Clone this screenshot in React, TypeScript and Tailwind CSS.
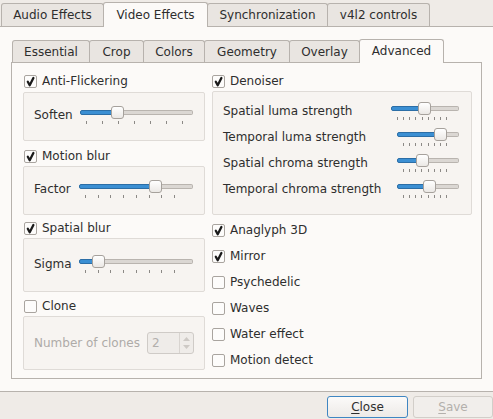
import React from 'react';

type SliderProps = { w: number; pos: number; ticks: number; t0: number; t1: number };

function Slider({ w, pos, ticks, t0, t1 }: SliderProps) {
  return (
    <div className="relative shrink-0" style={{ width: w }}>
      <div className="h-[13px] flex items-center">
        <div className="flex w-full h-[5px]">
          <div className="h-full bg-[#3b8fd3] border border-[#2c6ea6] rounded-l-[2px]" style={{ width: pos + 6 }} />
          <div className="h-full flex-1 bg-[#dbd7d3] border border-l-0 border-[#b9b4af] rounded-r-[2px]" />
        </div>
      </div>
      <span
        className="absolute top-0 w-[13px] h-[13px] rounded-[3px] border border-[#a6a19c] bg-gradient-to-b from-white to-[#ebe8e5]"
        style={{ left: pos }}
      />
      <div className="mt-[2px] h-[3px] flex justify-between" style={{ marginLeft: t0, width: t1 - t0 + 1 }}>
        {Array.from({ length: ticks }).map((_, i) => (
          <span key={i} className="w-px h-full bg-[#8c8986]" />
        ))}
      </div>
    </div>
  );
}

function Box({ checked }: { checked?: boolean }) {
  return (
    <span className="w-[13px] h-[13px] shrink-0 border border-[#a9a49f] rounded-[2px] bg-[#fdfcfb] flex items-center justify-center">
      {checked && (
        <svg width="11" height="11" viewBox="0 0 11 11">
          <path d="M2.8 5.8 L4.7 9.2 L8.4 2" fill="none" stroke="#1a1a1a" strokeWidth="2.3" strokeLinecap="round" strokeLinejoin="round" />
        </svg>
      )}
    </span>
  );
}

function CheckRow({ label, checked, className = '' }: { label: string; checked?: boolean; className?: string }) {
  return (
    <div className={`flex items-center gap-[5px] ${className}`}>
      <Box checked={checked} />
      <span>{label}</span>
    </div>
  );
}

function Tab({ label, selected, className = '' }: { label: string; selected?: boolean; className?: string }) {
  return (
    <div
      className={`flex items-center justify-center border border-b-0 border-[#b7b2ad] rounded-t-[3px] ${
        selected ? 'relative z-10 mb-[-1px] bg-[#fcfaf8] pb-[1px]' : 'bg-[#e9e5e1]'
      } ${className}`}
    >
      {label}
    </div>
  );
}

const group = 'border border-[#dfdbd7] rounded-[2px] bg-[#f7f4f1]';

export default function App() {
  return (
    <div className="w-[493px] h-[419px] overflow-hidden bg-[#efebe7] font-['DejaVu_Sans',sans-serif] text-[12px] text-[#2e2e2e]">
      <div className="flex items-end h-[26px] pl-[1px]">
        <Tab label="Audio Effects" className="w-[103px] h-[23px]" />
        <Tab label="Video Effects" selected className="w-[105px] h-[25px] -ml-px" />
        <Tab label="Synchronization" className="w-[121px] h-[23px] -ml-px" />
        <Tab label="v4l2 controls" className="w-[103px] h-[23px] -ml-px" />
      </div>

      <div className="h-[366px] border-y border-[#b7b2ad] bg-[#fcfaf8] pt-[11px] pl-[11px]">
        <div className="flex items-end h-[24px] pl-[1px]">
          <Tab label="Essential" className="w-[78px] h-[22px]" />
          <Tab label="Crop" className="w-[55px] h-[22px] -ml-px" />
          <Tab label="Colors" className="w-[62px] h-[22px] -ml-px" />
          <Tab label="Geometry" className="w-[86px] h-[22px] -ml-px" />
          <Tab label="Overlay" className="w-[71px] h-[22px] -ml-px" />
          <Tab label="Advanced" selected className="w-[85px] h-[24px] -ml-px" />
        </div>

        <div className="w-[471px] h-[317px] border border-[#b7b2ad] bg-[#fcfaf8] flex gap-[7px] pl-[11px] pt-[8px]">
          {/* left column */}
          <div className="w-[182px] flex flex-col">
            <CheckRow label="Anti-Flickering" checked className="h-[20px] pl-[1px]" />
            <div className={`${group} mt-[1px] h-[49px] flex items-center pb-[4px] pl-[10px]`}>
              <span className="w-[46px]">Soften</span>
              <Slider w={113} pos={31} ticks={7} t0={6} t1={102} />
            </div>

            <CheckRow label="Motion blur" checked className="h-[20px] mt-[5px] pl-[1px]" />
            <div className={`${group} h-[49px] flex items-center pb-[4px] pl-[10px]`}>
              <span className="w-[45px]">Factor</span>
              <Slider w={114} pos={70} ticks={8} t0={6} t1={95} />
            </div>

            <CheckRow label="Spatial blur" checked className="h-[20px] mt-[3px] pl-[1px]" />
            <div className={`${group} h-[54px] flex items-center pb-[3px] pl-[10px]`}>
              <span className="w-[45px]">Sigma</span>
              <Slider w={114} pos={13} ticks={8} t0={6} t1={95} />
            </div>

            <CheckRow label="Clone" className="h-[20px] mt-[4px] pl-[1px]" />
            <div className={`${group} h-[54px] flex items-center pl-[10px]`}>
              <span className="w-[113px] text-[#aeaba8]">Number of clones</span>
              <div className="w-[47px] h-[22px] border border-[#cfcbc7] rounded-[3px] bg-[#efece9] flex">
                <span className="flex-1 pl-[4px] flex items-center text-[#b2afac]">2</span>
                <div className="w-[14px] border-l border-[#d8d4d0] flex flex-col items-center justify-center gap-[4px]">
                  <svg width="7" height="4" viewBox="0 0 7 4"><path d="M0 4 L3.5 0 L7 4Z" fill="#cdc9c5" /></svg>
                  <svg width="7" height="4" viewBox="0 0 7 4"><path d="M0 0 L3.5 4 L7 0Z" fill="#cdc9c5" /></svg>
                </div>
              </div>
            </div>
          </div>

          {/* right column */}
          <div className="w-[260px] flex flex-col">
            <CheckRow label="Denoiser" checked className="h-[20px]" />
            <div className={`${group} h-[124px] flex flex-col pt-[6px] pl-[10px] pr-[12px]`}>
              <div className="h-[26px] flex items-center justify-between">
                <span>Spatial luma strength</span>
                <Slider w={68} pos={27} ticks={9} t0={6} t1={55} />
              </div>
              <div className="h-[26px] flex items-center justify-between">
                <span>Temporal luma strength</span>
                <Slider w={62} pos={37} ticks={8} t0={6} t1={49} />
              </div>
              <div className="h-[26px] flex items-center justify-between">
                <span>Spatial chroma strength</span>
                <Slider w={62} pos={19} ticks={8} t0={6} t1={49} />
              </div>
              <div className="h-[26px] flex items-center justify-between">
                <span>Temporal chroma strength</span>
                <Slider w={62} pos={26} ticks={8} t0={6} t1={49} />
              </div>
            </div>

            <div className="mt-[2px] flex flex-col">
              <CheckRow label="Anaglyph 3D" checked className="h-[26px]" />
              <CheckRow label="Mirror" checked className="h-[26px]" />
              <CheckRow label="Psychedelic" className="h-[26px]" />
              <CheckRow label="Waves" className="h-[26px]" />
              <CheckRow label="Water effect" className="h-[26px]" />
              <CheckRow label="Motion detect" className="h-[26px]" />
            </div>
          </div>
        </div>
      </div>

      <div className="flex justify-end gap-[5px] pt-[4px]">
        <button className="w-[81px] h-[22px] rounded-[3px] border border-[#3f86c2] bg-gradient-to-b from-[#fbfaf9] to-[#edeae7] text-[#2e2e2e]">
          <span className="underline underline-offset-2">C</span>lose
        </button>
        <button className="w-[80px] h-[22px] rounded-[3px] border border-[#d2cec9] bg-[#f1eeeb] text-[#b3b0ac]">
          <span className="underline underline-offset-2">S</span>ave
        </button>
      </div>
    </div>
  );
}
